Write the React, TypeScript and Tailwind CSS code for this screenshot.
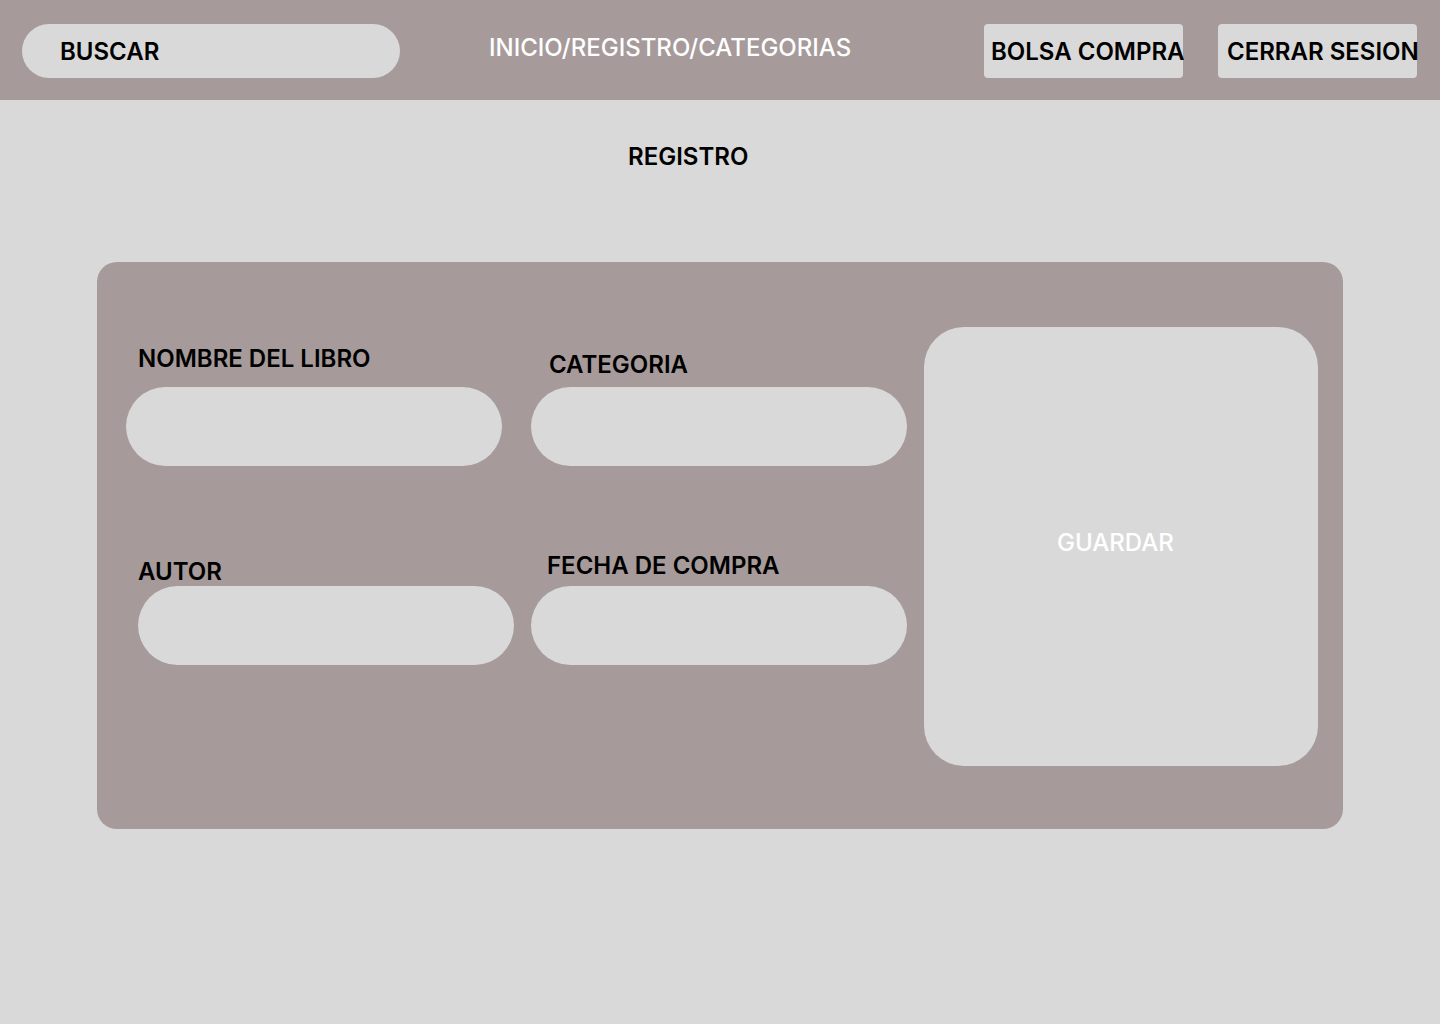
import React from "react";

const font = { fontFamily: "Inter, 'Noto Sans', sans-serif" };

export default function App() {
  return (
    <div
      className="w-[1440px] min-h-[1024px] bg-[#d9d9d9] text-black font-semibold text-[24px] leading-[24px]"
      style={font}
    >
      {/* Header */}
      <header className="h-[100px] bg-[#a69a9a] flex items-start">
        <div className="ml-[22px] mt-[24px] w-[378px] h-[54px] rounded-full bg-[#d9d9d9] flex items-center pl-[38px] pt-[2px]">
          <span>BUSCAR</span>
        </div>
        <div className="ml-[89px] mt-[36px] w-[495px] text-white font-medium whitespace-nowrap">
          INICIO/REGISTRO/CATEGORIAS
        </div>
        <button className="mt-[24px] w-[199px] h-[54px] rounded-[4px] bg-[#d9d9d9] flex items-center pl-[7px] pt-[2px] whitespace-nowrap overflow-visible">
          BOLSA COMPRA
        </button>
        <button className="ml-[35px] mt-[24px] w-[199px] h-[54px] rounded-[4px] bg-[#d9d9d9] flex items-center pl-[9px] pt-[2px] whitespace-nowrap overflow-visible">
          CERRAR SESION
        </button>
      </header>

      {/* Title */}
      <h1 className="mt-[45px] ml-[628px] w-fit">REGISTRO</h1>

      {/* Card */}
      <section className="mt-[93px] ml-[97px] w-[1246px] h-[567px] rounded-[20px] bg-[#a69a9a] flex items-start">
        {/* Left column */}
        <div className="ml-[29px] mt-[85px] w-[388px] flex flex-col">
          <label className="ml-[12px]">NOMBRE DEL LIBRO</label>
          <div className="mt-[16px] w-[376px] h-[79px] rounded-full bg-[#d9d9d9]" />
          <label className="ml-[12px] mt-[94px]">AUTOR</label>
          <div className="ml-[12px] mt-[2px] w-[376px] h-[79px] rounded-full bg-[#d9d9d9]" />
        </div>

        {/* Middle column */}
        <div className="ml-[17px] mt-[91px] w-[376px] flex flex-col">
          <label className="ml-[18px]">CATEGORIA</label>
          <div className="mt-[10px] w-[376px] h-[79px] rounded-full bg-[#d9d9d9]" />
          <label className="ml-[16px] mt-[88px]">FECHA DE COMPRA</label>
          <div className="mt-[8px] w-[376px] h-[79px] rounded-full bg-[#d9d9d9]" />
        </div>

        {/* Save button */}
        <button className="ml-[17px] mt-[65px] w-[394px] h-[439px] rounded-[40px] bg-[#d9d9d9] text-white font-medium flex items-start justify-start pt-[204px] pl-[133px]">
          GUARDAR
        </button>
      </section>
    </div>
  );
}
